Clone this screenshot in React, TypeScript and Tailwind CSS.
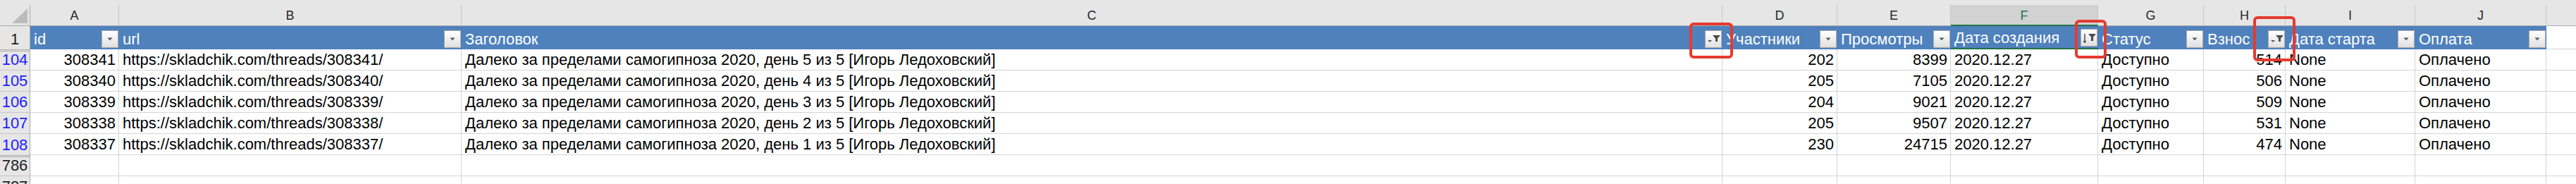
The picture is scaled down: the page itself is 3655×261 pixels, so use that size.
import React from 'react';

type Btn = 'drop' | 'filter' | 'sort';

const cols: { letter: string; w: string; title: string; btn: Btn; right: boolean }[] = [
  { letter: 'A', w: 'w-[126px]', title: 'id', btn: 'drop', right: true },
  { letter: 'B', w: 'w-[486px]', title: 'url', btn: 'drop', right: false },
  { letter: 'C', w: 'w-[1789px]', title: 'Заголовок', btn: 'filter', right: false },
  { letter: 'D', w: 'w-[163px]', title: 'Участники', btn: 'drop', right: true },
  { letter: 'E', w: 'w-[161px]', title: 'Просмотры', btn: 'drop', right: true },
  { letter: 'F', w: 'w-[209px]', title: 'Дата создания', btn: 'sort', right: false },
  { letter: 'G', w: 'w-[150px]', title: 'Статус', btn: 'drop', right: false },
  { letter: 'H', w: 'w-[116px]', title: 'Взнос', btn: 'filter', right: true },
  { letter: 'I', w: 'w-[184px]', title: 'Дата старта', btn: 'drop', right: false },
  { letter: 'J', w: 'w-[186px]', title: 'Оплата', btn: 'drop', right: false },
];

const title = (day: number) => `Далеко за пределами самогипноза 2020, день ${day} из 5 [Игорь Ледоховский]`;

const rows = [
  { n: '104', id: '308341', people: '202', views: '8399', day: 5, fee: '514' },
  { n: '105', id: '308340', people: '205', views: '7105', day: 4, fee: '506' },
  { n: '106', id: '308339', people: '204', views: '9021', day: 3, fee: '509' },
  { n: '107', id: '308338', people: '205', views: '9507', day: 2, fee: '531' },
  { n: '108', id: '308337', people: '230', views: '24715', day: 1, fee: '474' },
].map((r) => ({
  n: r.n,
  cells: [
    r.id,
    `https://skladchik.com/threads/${r.id}/`,
    title(r.day),
    r.people,
    r.views,
    '2020.12.27',
    'Доступно',
    r.fee,
    'None',
    'Оплачено',
  ],
}));

function FilterButton({ kind }: { kind: Btn }) {
  return (
    <div className="mb-[2px] mr-[1px] h-[25px] w-[24px] shrink-0 border border-[#ababab] bg-linear-to-b from-white to-[#e0e0e0]">
      <svg width="22" height="23" viewBox="1 1 22 23">
        {kind === 'drop' && <path d="M8.5 10.5h7l-3.5 4z" fill="#5a5a5a" />}
        {kind === 'filter' && (
          <>
            <path d="M11 7h11l-4 4.5V16h-3v-4.5z" fill="#4a4a4a" />
            <path d="M4 14h6l-3 3z" fill="#5a5a5a" />
          </>
        )}
        {kind === 'sort' && (
          <>
            <path d="M11 7h11l-4 4.5V17h-3v-5.5z" fill="#4a4a4a" />
            <path d="M6 7v12" stroke="#4a4a4a" strokeWidth="1.5" />
            <path d="M3.5 17h5L6 20.5z" fill="#4a4a4a" />
          </>
        )}
      </svg>
    </div>
  );
}

function RowHead({ label, blue, extra = '' }: { label: string; blue?: boolean; extra?: string }) {
  return (
    <div
      className={`flex w-[43px] shrink-0 items-end justify-center border-r border-r-[#ababab] bg-[#e6e6e6] pb-[2px] leading-[24px] ${
        blue ? 'text-[#1c1cff]' : 'text-[#222]'
      } ${extra}`}
    >
      {label}
    </div>
  );
}

function BoxMark({ pos }: { pos: string }) {
  return <div className={`pointer-events-none absolute rounded-[6px] border-4 border-[#e53b2f] ${pos}`} />;
}

export default function App() {
  return (
    <div className="relative h-[261px] w-[3655px] overflow-hidden bg-white font-['Liberation_Sans',Arial,sans-serif] text-[22px] text-black">
      <div className="h-[7px] bg-[#e6e6e6]" />

      {/* column letters */}
      <div className="flex h-[30px] bg-[#e6e6e6]">
        <div className="relative w-[43px] shrink-0 border-b border-r border-[#ababab]">
          <svg className="absolute left-0 top-0" width="43" height="29">
            <path d="M39 5V26H17z" fill="#bcbcbc" />
          </svg>
        </div>
        {cols.map((c) =>
          c.letter === 'F' ? (
            <div
              key={c.letter}
              className={`${c.w} flex shrink-0 items-center justify-center border-b-2 border-r border-b-[#217346] border-r-[#c8c8c8] bg-[#d2d2d2] pt-[2px] text-[18px] text-[#217346]`}
            >
              {c.letter}
            </div>
          ) : (
            <div
              key={c.letter}
              className={`${c.w} flex shrink-0 items-center justify-center border-b border-r border-b-[#ababab] border-r-[#c8c8c8] pt-[2px] text-[18px] text-[#262626]`}
            >
              {c.letter}
            </div>
          )
        )}
        <div className="flex-1 border-b border-[#ababab]" />
      </div>

      {/* table header row */}
      <div className="flex h-[33px]">
        <RowHead label="1" />
        {cols.map((c) => (
          <div
            key={c.letter}
            className={`${c.w} flex shrink-0 items-end justify-between bg-[#4f81bd] pl-[5px] leading-[24px] text-white ${
              c.letter === 'F' ? 'border-b-2 border-[#217346]' : ''
            }`}
          >
            <span className="mb-[2px] whitespace-nowrap">{c.title}</span>
            <FilterButton kind={c.btn} />
          </div>
        ))}
        <div className="flex-1 border-b border-[#d4d4d4]" />
      </div>

      {rows.map((r, i) => (
        <div key={r.n} className="flex h-[30px]">
          <RowHead
            label={r.n}
            blue
            extra={`${i === 0 ? 'border-t-[3px] border-double border-t-[#ababab]' : ''} ${
              i === rows.length - 1 ? '' : 'border-b border-b-[#c6c6c6]'
            }`}
          />
          {cols.map((c, ci) => (
            <div
              key={c.letter}
              className={`${c.w} flex shrink-0 items-end overflow-hidden whitespace-nowrap border-b border-r border-[#d4d4d4] pb-[2px] leading-[24px] ${
                c.right ? 'justify-end pr-[4px]' : 'pl-[5px]'
              }`}
            >
              {r.cells[ci]}
            </div>
          ))}
          <div className="flex-1 border-b border-[#d4d4d4]" />
        </div>
      ))}

      {['786', '787'].map((n, i) => (
        <div key={n} className="flex h-[30px]">
          <RowHead
            label={n}
            extra={i === 0 ? 'border-t-[3px] border-double border-t-[#ababab] border-b border-b-[#c6c6c6]' : 'border-b border-b-[#c6c6c6]'}
          />
          {cols.map((c) => (
            <div key={c.letter} className={`${c.w} shrink-0 border-b border-r border-[#d4d4d4]`} />
          ))}
          <div className="flex-1 border-b border-[#d4d4d4]" />
        </div>
      ))}

      <BoxMark pos="left-[2397px] top-[32px] h-[51px] w-[62px]" />
      <BoxMark pos="left-[2944px] top-[28px] h-[55px] w-[45px]" />
      <BoxMark pos="left-[3197px] top-[23px] h-[64px] w-[60px]" />
    </div>
  );
}
